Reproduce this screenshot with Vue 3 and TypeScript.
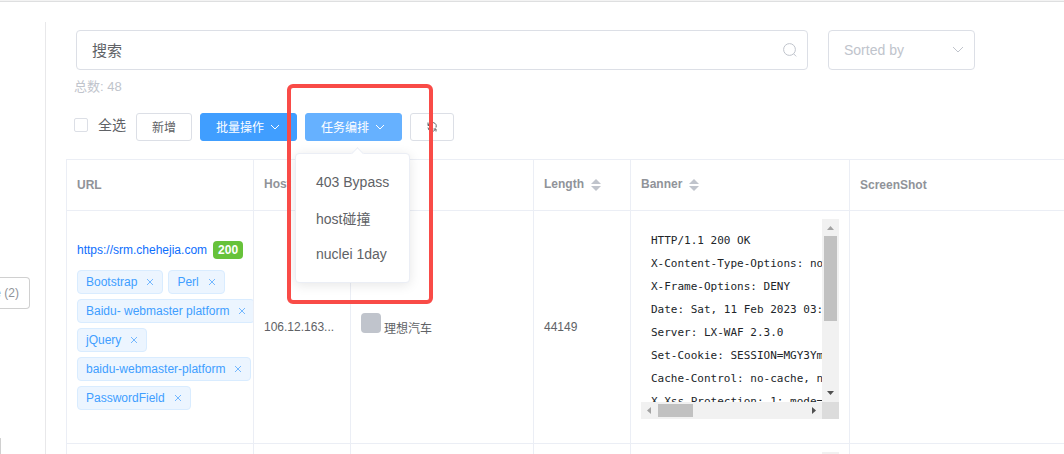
<script setup lang="ts">
import { ref } from 'vue'

interface Asset {
  url: string
  status: string
  tags: string[]
  host: string
  title: string
  length: string
  banner: string[]
}

const keyword = ref('搜索')
const sortBy = ref('')
const allSelected = ref(false)
const total = 48

const taskMenu = ['403 Bypass', 'host碰撞', 'nuclei 1day']

const columns = [
  { key: 'url', label: 'URL', sortable: false },
  { key: 'host', label: 'Host', sortable: true },
  { key: 'title', label: '', sortable: false },
  { key: 'length', label: 'Length', sortable: true },
  { key: 'banner', label: 'Banner', sortable: true },
  { key: 'shot', label: 'ScreenShot', sortable: false }
]

const assets: Asset[] = [
  {
    url: 'https://srm.chehejia.com',
    status: '200',
    tags: ['Bootstrap', 'Perl', 'Baidu- webmaster platform', 'jQuery', 'baidu-webmaster-platform', 'PasswordField'],
    host: '106.12.163...',
    title: '理想汽车',
    length: '44149',
    banner: [
      'HTTP/1.1 200 OK',
      'X-Content-Type-Options: no',
      'X-Frame-Options: DENY',
      'Date: Sat, 11 Feb 2023 03:',
      'Server: LX-WAF 2.3.0',
      'Set-Cookie: SESSION=MGY3Ym',
      'Cache-Control: no-cache, n',
      'X-Xss-Protection: 1; mode='
    ]
  },
  { url: '', status: '', tags: [], host: '', title: '', length: '', banner: [] }
]
</script>

<template>
  <div class="page">
    <aside class="side">
      <button type="button" class="side-btn">e (2)</button>
      <button type="button" class="side-btn side-btn-short" aria-label="filter"></button>
    </aside>

    <main class="main">
      <div class="filters">
        <div class="search">
          <input v-model="keyword" type="text" aria-label="搜索" />
          <svg class="search-icon" viewBox="0 0 14 14" aria-hidden="true">
            <circle cx="6.5" cy="6.5" r="5.9" />
            <path d="M10.6 10.8l2.6 2.600" />
          </svg>
        </div>
        <div class="sort">
          <select v-model="sortBy" aria-label="Sorted by">
            <option value="">Sorted by</option>
          </select>
          <svg class="sort-chevron" viewBox="0 0 12 12" aria-hidden="true"><path d="M1 3l5 5 5-5" /></svg>
        </div>
      </div>

      <p class="total">总数: {{ total }}</p>

      <div class="toolbar">
        <label class="check"><input v-model="allSelected" type="checkbox" /><span>全选</span></label>
        <button type="button" class="btn">新增</button>
        <button type="button" class="btn primary">
          批量操作<svg viewBox="0 0 12 12" aria-hidden="true"><path d="M2 4l4 4 4-4" /></svg>
        </button>
        <div class="dropdown">
          <button type="button" class="btn primary active">
            任务编排<svg viewBox="0 0 12 12" aria-hidden="true"><path d="M2 4l4 4 4-4" /></svg>
          </button>
          <div class="highlight"></div>
          <ul class="menu">
            <li v-for="item in taskMenu" :key="item"><button type="button">{{ item }}</button></li>
          </ul>
        </div>
        <button type="button" class="btn" aria-label="refresh">
          <svg class="refresh" viewBox="0 0 12 12" aria-hidden="true">
            <path d="M2 1.500v3h3M2.300 4.300A4 4 0 0 1 10 6.500M10 10.500V8H7.500M9.500 8.200A4 4 0 0 1 2 6.500" />
          </svg>
        </button>
      </div>

      <table class="grid">
        <colgroup>
          <col v-for="c in columns" :key="c.key" :class="'col-' + c.key" />
        </colgroup>
        <thead>
          <tr>
            <th v-for="c in columns" :key="c.key" scope="col" :class="{ sortable: c.sortable }">
              {{ c.label }}<span v-if="c.sortable" class="carets"><i class="up"></i><i class="down"></i></span>
            </th>
          </tr>
        </thead>
        <tbody>
          <tr v-for="(a, i) in assets" :key="i">
            <td>
              <div v-if="a.url" class="link-line">
                <a :href="a.url">{{ a.url }}</a><span class="badge">{{ a.status }}</span>
              </div>
              <div class="tags">
                <span v-for="t in a.tags" :key="t" class="tag">
                  {{ t }}
                  <button type="button" :aria-label="'remove ' + t">
                    <svg viewBox="0 0 14 14" aria-hidden="true"><path d="M4 4l6 6M10 4l-6 6" /></svg>
                  </button>
                </span>
              </div>
            </td>
            <td>{{ a.host }}</td>
            <td>
              <div v-if="a.title" class="site"><span class="avatar"></span><span class="site-name">{{ a.title }}</span></div>
            </td>
            <td>{{ a.length }}</td>
            <td class="banner-cell">
              <div class="console">
                <pre>{{ a.banner.join('\n') }}</pre>
                <div class="bar vertical">
                  <svg viewBox="0 0 17 17" aria-hidden="true"><path fill="#a3a3a3" d="M8.500 7L12 11H5z" /></svg>
                  <span class="thumb"></span>
                  <svg viewBox="0 0 17 17" aria-hidden="true"><path fill="#505050" d="M5 6h7l-3.500 4z" /></svg>
                </div>
                <div class="bar horizontal">
                  <svg viewBox="0 0 17 17" aria-hidden="true"><path fill="#a3a3a3" d="M6 8.500L10 5v7z" /></svg>
                  <span class="thumb"></span>
                  <svg viewBox="0 0 17 17" aria-hidden="true"><path fill="#505050" d="M7 5l4 3.500L7 12z" /></svg>
                </div>
                <div class="corner"></div>
              </div>
            </td>
            <td></td>
          </tr>
        </tbody>
      </table>
    </main>
  </div>
</template>

<style>
body {
  margin: 0;
  overflow: hidden;
}
</style>

<style scoped>
* {
  box-sizing: border-box;
}

.page {
  display: flex;
  height: 100vh;
  overflow: hidden;
  padding-top: 1px;
  background: linear-gradient(#f3f3f3 1px, #fff 1px);
  color: #606266;
  font-family: 'Liberation Sans', Arial, 'Noto Sans CJK SC', sans-serif;
  font-size: 12px;
  box-shadow: inset 0 2px #dedfe0;
}

button,
input,
select {
  margin: 0;
  font-family: inherit;
}

svg {
  fill: none;
  stroke: currentColor;
}

.page {
  border-top: 1px solid #f3f3f3;
  background: #fff;
  box-shadow: inset 0 1px #dedfe0;
}

.side {
  display: flex;
  flex: none;
  flex-direction: column;
  align-items: flex-start;
  gap: 129px;
  width: 46px;
  margin-top: 20px;
  padding-top: 255px;
  border-right: 1px solid #e8e8ea;
}

.side-btn {
  display: flex;
  flex: none;
  align-items: center;
  justify-content: flex-end;
  width: 30px;
  height: 32px;
  padding: 0 10px 0 0;
  border: 1px solid #d0d0d0;
  border-left: 0;
  border-radius: 0 4px 4px 0;
  background: #fff;
  color: #909399;
  font-size: 12px;
  white-space: nowrap;
}

.side-btn-short {
  width: 1px;
  padding: 0;
}

.main {
  flex: 1;
  min-width: 0;
  padding: 28px 0 0 20px;
}

.filters {
  display: flex;
  gap: 20px;
  margin: 0 89px 0 10px;
}

.search,
.sort {
  display: grid;
  align-items: center;
}

.search {
  flex: 1;
}

.sort {
  width: 147px;
}

.search > *,
.sort > * {
  grid-area: 1 / 1;
}

.search input,
.sort select {
  width: 100%;
  height: 40px;
  padding: 0 15px;
  border: 1px solid #dcdfe6;
  border-radius: 4px;
  outline: 0;
  background: #fff;
  color: #606266;
  font-size: 15px;
}

.search input {
  padding-bottom: 2px;
}

.sort select {
  appearance: none;
  color: #c0c4cc;
  font-size: 14px;
}

.search-icon,
.sort-chevron {
  justify-self: end;
  width: 14px;
  height: 14px;
  margin-right: 11px;
  color: #c0c4cc;
  pointer-events: none;
}

.sort-chevron {
  width: 12px;
  height: 12px;
}

.total {
  margin: 7px 0 0 8px;
  color: #c0c4cc;
  font-size: 13px;
  line-height: 20px;
}

.toolbar {
  display: flex;
  align-items: center;
  gap: 8px;
  margin: 16px 0 18px 8px;
}

.check {
  display: flex;
  align-items: center;
  gap: 10px;
  margin: 0 2px 4px 0;
  font-size: 14px;
  line-height: 20px;
}

.check input {
  width: 14px;
  height: 14px;
  border: 1px solid #dcdfe6;
  border-radius: 2px;
  appearance: none;
  background: #fff;
}

.btn {
  display: flex;
  align-items: center;
  justify-content: center;
  gap: 5px;
  height: 28px;
  padding: 0 15px 1px;
  border: 1px solid #dcdfe6;
  border-radius: 3px;
  background: #fff;
  color: #606266;
  font-size: 12px;
  white-space: nowrap;
}

.btn svg {
  width: 12px;
  height: 12px;
}

.primary {
  border-color: #409eff;
  background: #409eff;
  color: #fff;
}

.active {
  border-color: #66b1ff;
  background: #66b1ff;
}

.dropdown {
  position: relative;
}

.menu {
  position: absolute;
  z-index: 2;
  top: 40px;
  left: -10px;
  margin: 0;
  padding: 10px 0;
  border: 1px solid #ebeef5;
  border-radius: 4px;
  background: #fff;
  box-shadow: 0 2px 12px rgba(0, 0, 0, 0.1);
  list-style: none;
}

.menu::before {
  position: absolute;
  top: -5px;
  left: 57px;
  width: 8px;
  height: 8px;
  border: solid #ebeef5;
  border-width: 1px 0 0 1px;
  background: #fff;
  content: '';
  transform: rotate(45deg);
}

.menu button {
  display: block;
  width: 100%;
  height: 36px;
  padding: 0 20px;
  border: 0;
  background: none;
  color: #606266;
  font-size: 14px;
  text-align: left;
  white-space: nowrap;
}

.highlight {
  position: absolute;
  z-index: 3;
  top: -29px;
  left: -18px;
  width: 146px;
  height: 220px;
  border: 4px solid #f94b47;
  border-radius: 6px;
  pointer-events: none;
}

.grid {
  width: 100%;
  border: solid #ebeef5;
  border-width: 1px 0 0 1px;
  border-spacing: 0;
  table-layout: fixed;
}

.col-url {
  width: 187px;
}

.col-host,
.col-length {
  width: 97px;
}

.col-title {
  width: 183px;
}

.col-banner {
  width: 219px;
}

.grid th,
.grid td {
  overflow: hidden;
  padding: 0 10px;
  border: solid #ebeef5;
  border-width: 0 1px 1px 0;
  text-align: left;
  vertical-align: middle;
  white-space: nowrap;
}

.grid th:last-child,
.grid td:last-child {
  border-right: 0;
}

.grid th {
  height: 51px;
  color: #909399;
  font-weight: bold;
}

.grid .sortable {
  padding-bottom: 2px;
}

.carets {
  display: inline-flex;
  flex-direction: column;
  gap: 2px;
  margin-left: 7px;
  vertical-align: middle;
}

.carets i {
  border: 5px solid transparent;
}

.carets .up {
  border-top: 0;
  border-bottom-color: #c0c4cc;
}

.carets .down {
  border-bottom: 0;
  border-top-color: #c0c4cc;
}

.link-line {
  display: flex;
  align-items: center;
  gap: 6px;
  height: 22px;
  margin-bottom: 9px;
}

.link-line a {
  color: #0d6efd;
  text-decoration: none;
}

.badge {
  padding: 0 5px;
  border-radius: 4px;
  background: #67c23a;
  color: #fff;
  font-weight: bold;
  line-height: 18px;
}

.tags {
  display: flex;
  flex-wrap: wrap;
  gap: 5px;
  padding-bottom: 6px;
}

.tag {
  display: flex;
  align-items: center;
  gap: 6px;
  height: 24px;
  padding: 0 5px 0 8px;
  border: 1px solid #d9ecff;
  border-radius: 4px;
  background: #ecf5ff;
  color: #409eff;
}

.tag button {
  width: 14px;
  height: 14px;
  padding: 0;
  border: 0;
  background: none;
  color: #409eff;
}

.tag svg {
  display: block;
  stroke-width: 0.7;
}

.site {
  display: flex;
  align-items: center;
  gap: 3px;
  padding-bottom: 9px;
}

.avatar {
  width: 20px;
  height: 20px;
  border-radius: 4px;
  background: #c0c4cc;
}

.site-name {
  padding-top: 9px;
}

.grid .banner-cell {
  padding: 8px 10px 24px;
}

.console {
  display: grid;
  grid-template: 183px 17px / 1fr 17px;
}

.console pre {
  overflow: hidden;
  margin: 0;
  padding: 10px 0 0 10px;
  color: #212529;
  font-family: 'DejaVu Sans Mono', monospace;
  font-size: 11px;
  line-height: 23px;
}

.bar {
  display: flex;
  background: #f1f1f1;
}

.bar svg {
  flex: none;
  width: 17px;
  height: 17px;
  stroke: none;
}

.vertical {
  flex-direction: column;
  justify-content: space-between;
}

.thumb {
  background: #c1c1c1;
}

.vertical .thumb {
  height: 85px;
  margin: 0 2px auto;
}

.horizontal .thumb {
  width: 35px;
  margin: 2px auto 2px 0;
}

.corner {
  background: #dcdcdc;
}
</style>
